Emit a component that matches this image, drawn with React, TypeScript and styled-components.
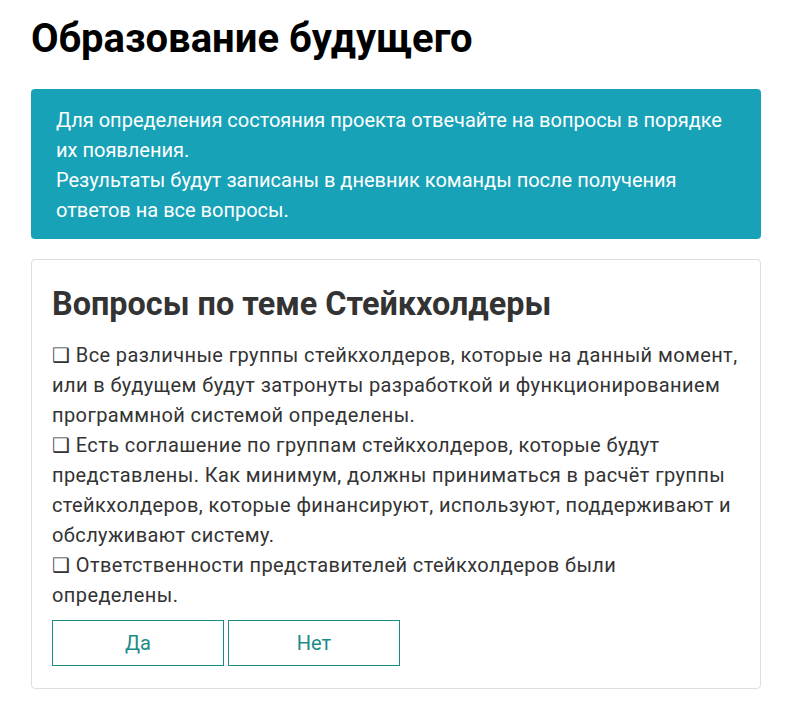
import React from 'react';
import styled, { createGlobalStyle } from 'styled-components';

const GlobalStyle = createGlobalStyle`
  body {
    margin: 0;
    background: #fff;
    font-family: Roboto, "Noto Sans", sans-serif;
  }
`;

const Page = styled.div`
  padding: 15px 30px 16px 31px;
`;

const Title = styled.h1`
  margin: 0 0 26px;
  font-size: 40px;
  line-height: 48px;
  font-weight: 700;
  color: #000;
`;

const InfoBox = styled.div`
  background: #17a2b8;
  color: #fff;
  border-radius: 4px;
  padding: 16px 30px 14px 25px;
  font-size: 20px;
  line-height: 30px;
`;

const Card = styled.section`
  margin-top: 20px;
  border: 1px solid #dfdfdf;
  border-radius: 4px;
  padding: 24px 22px 22px 20px;
`;

const CardTitle = styled.h2`
  margin: 0 0 16px;
  font-size: 32.4px;
  line-height: 40px;
  font-weight: 700;
  color: #333;
`;

const Question = styled.p`
  margin: 0;
  font-size: 20px;
  line-height: 30px;
  letter-spacing: 0.4px;
  color: #333;
`;

const Actions = styled.div`
  display: flex;
  gap: 4px;
  margin-top: 10px;
`;

const AnswerButton = styled.button`
  width: 172px;
  height: 46px;
  background: #fff;
  border: 1px solid #1a8c87;
  border-radius: 0;
  color: #1a8c87;
  font-family: Roboto, sans-serif;
  font-size: 20px;
  cursor: pointer;
`;

const questions = [
  'Все различные группы стейкхолдеров, которые на данный момент, или в будущем будут затронуты разработкой и функционированием программной системой определены.',
  'Есть соглашение по группам стейкхолдеров, которые будут представлены. Как минимум, должны приниматься в расчёт группы стейкхолдеров, которые финансируют, используют, поддерживают и обслуживают систему.',
  'Ответственности представителей стейкхолдеров были определены.',
];

export default function App() {
  return (
    <Page>
      <GlobalStyle />
      <Title>Образование будущего</Title>
      <InfoBox>
        Для определения состояния проекта отвечайте на вопросы в порядке их появления.
        <br />
        Результаты будут записаны в дневник команды после получения ответов на все вопросы.
      </InfoBox>
      <Card>
        <CardTitle>Вопросы по теме Стейкхолдеры</CardTitle>
        {questions.map((q) => (
          <Question key={q}>❑ {q}</Question>
        ))}
        <Actions>
          <AnswerButton>Да</AnswerButton>
          <AnswerButton>Нет</AnswerButton>
        </Actions>
      </Card>
    </Page>
  );
}
